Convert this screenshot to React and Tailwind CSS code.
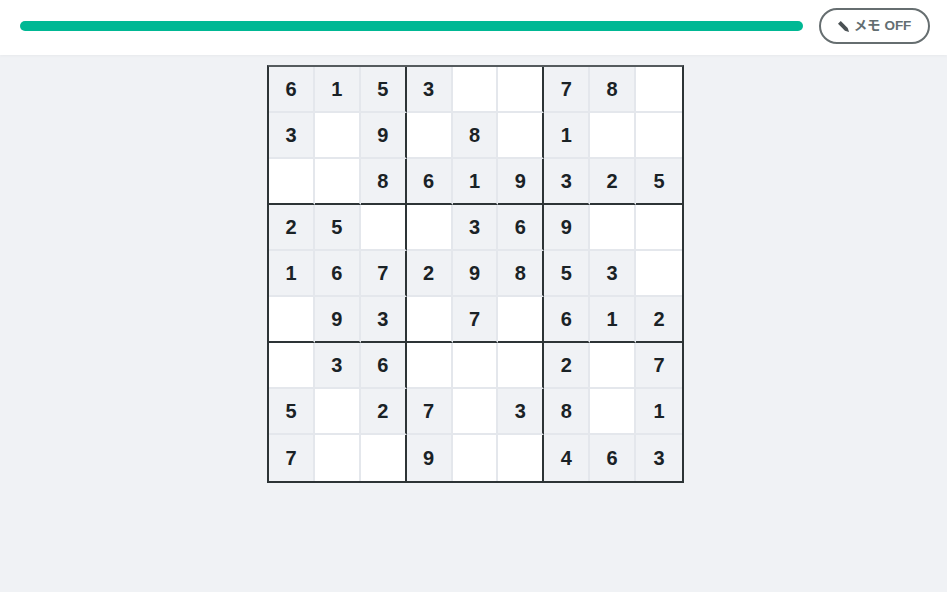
const BOARD = [
  '6153..78.',
  '3.9.8.1..',
  '..8619325',
  '25..369..',
  '16729853.',
  '.93.7.612',
  '.36...2.7',
  '5.27.38.1',
  '7..9..463',
];

function Cell({ value, row, col }) {
  const right = col === 8 ? '' : col % 3 === 2 ? 'border-r-2 border-r-[#2d3436]' : 'border-r-2 border-r-[#e4e7ec]';
  const bottom = row === 8 ? '' : row % 3 === 2 ? 'border-b-2 border-b-[#2d3436]' : 'border-b-2 border-b-[#e4e7ec]';
  return (
    <div
      className={`flex items-center justify-center text-[20px] font-bold text-[#1a2226] ${right} ${bottom} ${
        value === '.' ? 'bg-white' : 'bg-[#f0f2f5]'
      }`}
    >
      {value === '.' ? '' : value}
    </div>
  );
}

export default function App() {
  return (
    <div className="min-h-[592px] bg-[#f0f2f5] font-['Liberation_Sans','Noto_Sans_CJK_JP',sans-serif]">
      <div className="flex h-[55px] items-center gap-4 bg-white pb-[3px] pl-5 pr-[17px] shadow-[0_1px_3px_rgba(0,0,0,0.04)]">
        <div className="h-[10px] flex-1 rounded-full bg-[#00b894]" />
        <button className="flex h-[36px] w-[111px] items-center justify-center gap-[5px] rounded-full border-2 border-[#666e70] bg-white text-[13.5px] font-bold text-[#636e72]">
          <svg width="11" height="11" viewBox="0 0 12 12" className="shrink-0">
            <path d="M0 3 3 0l7.6 7.6L12 12l-4.4-1.4z" fill="#4a5154" />
          </svg>
          <span>メモ OFF</span>
        </button>
      </div>
      <div className="flex justify-center pl-[4px] pt-[10px]">
        <div className="grid h-[418px] w-[417px] grid-cols-9 grid-rows-9 border-2 border-[#2d3436] border-t-[#555b5e]">
          {BOARD.map((line, r) =>
            line.split('').map((v, c) => <Cell key={`${r}-${c}`} value={v} row={r} col={c} />)
          )}
        </div>
      </div>
    </div>
  );
}
